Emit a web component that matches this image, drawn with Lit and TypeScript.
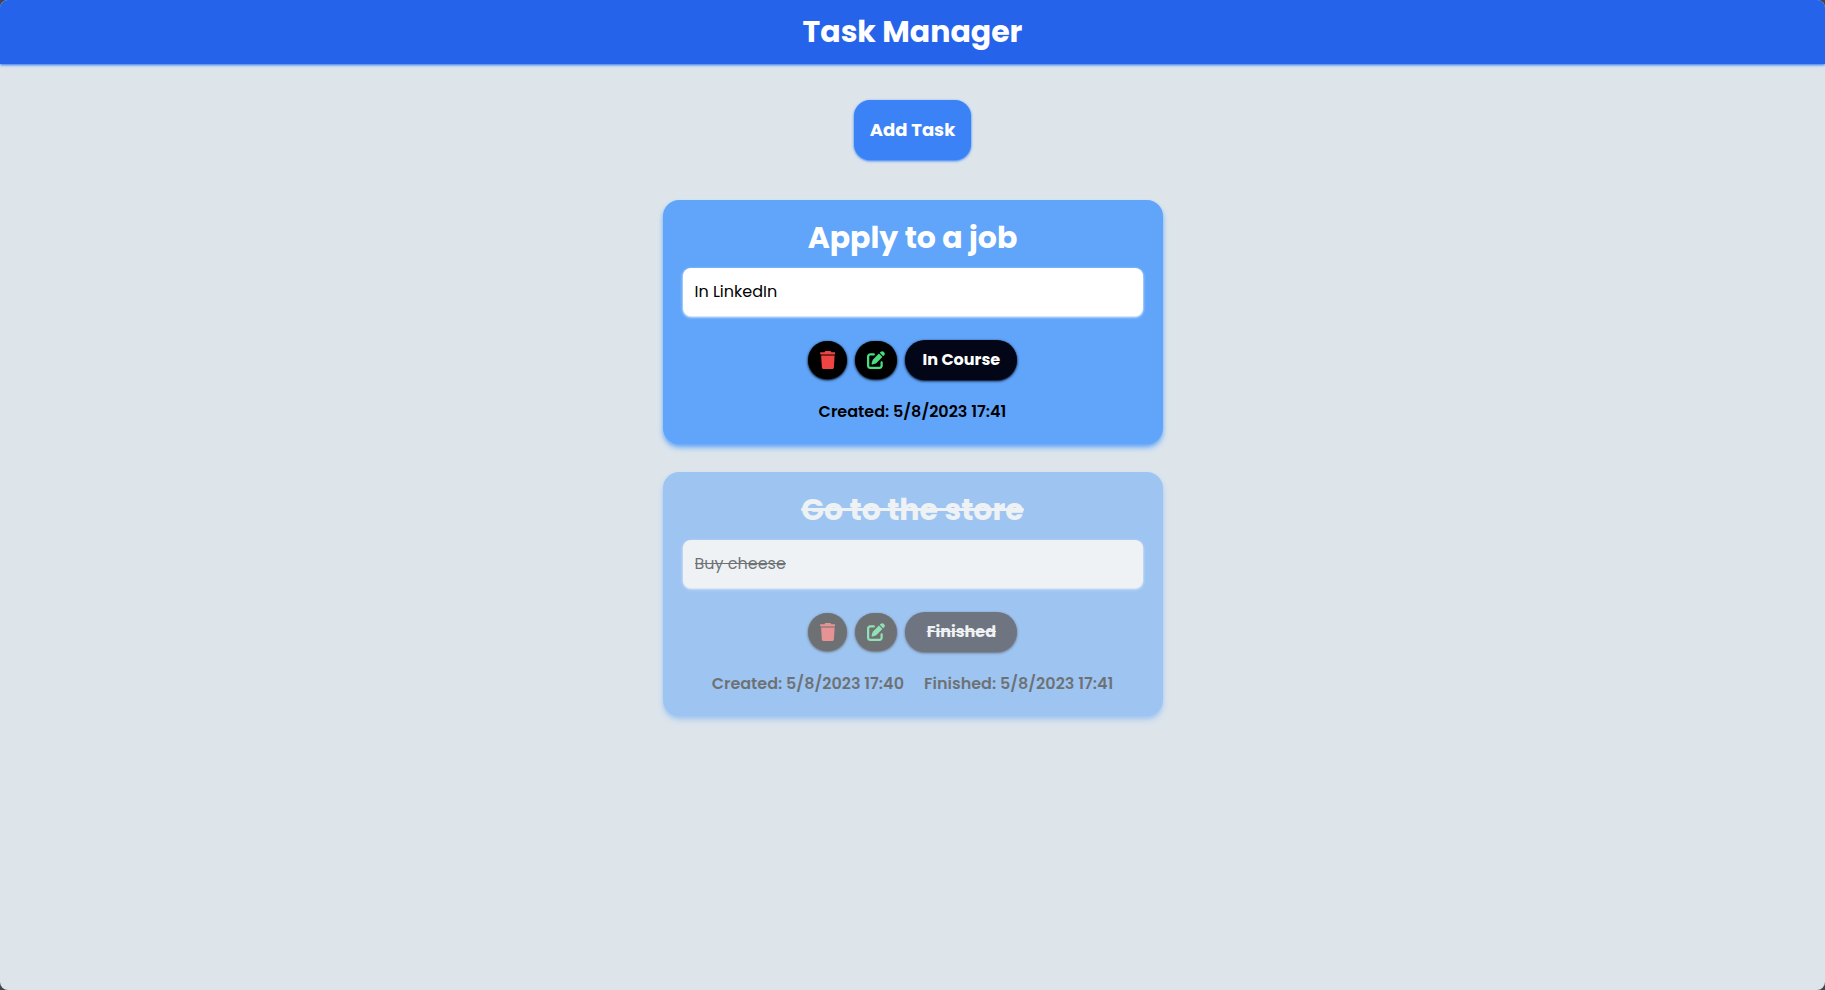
import { LitElement, html, svg, css, nothing } from "lit";
import { customElement, property } from "lit/decorators.js";
import { classMap } from "lit/directives/class-map.js";

interface Task {
  id: number;
  title: string;
  description: string;
  created: string;
  finished?: string;
}

const tasks: Task[] = [
  { id: 1, title: "Apply to a job", description: "In LinkedIn", created: "5/8/2023 17:41" },
  {
    id: 2,
    title: "Go to the store",
    description: "Buy cheese",
    created: "5/8/2023 17:40",
    finished: "5/8/2023 17:41",
  },
];

const trashPath = svg`<path d="M135.2 17.7L128 32H32C14.3 32 0 46.3 0 64S14.3 96 32 96H416c17.7 0 32-14.3 32-32s-14.3-32-32-32H320l-7.2-14.3C307.4 6.8 296.3 0 284.2 0H163.8c-12.1 0-23.2 6.8-28.6 17.7zM416 128H32L53.2 467c1.6 25.3 22.6 45 47.9 45H346.9c25.3 0 46.3-19.7 47.9-45L416 128z"/>`;
const editPath = svg`<path d="M471.6 21.7c-21.9-21.9-57.3-21.9-79.2 0L362.3 51.7l97.9 97.9 30.1-30.1c21.9-21.9 21.9-57.3 0-79.2L471.6 21.7zm-299.2 220c-6.1 6.1-10.8 13.6-13.5 21.9l-29.6 88.8c-2.9 8.6-.6 18.1 5.8 24.6s15.9 8.7 24.6 5.8l88.8-29.6c8.2-2.7 15.7-7.4 21.9-13.5L437.7 172.3 339.7 74.3 172.4 241.7zM96 64C43 64 0 107 0 160V416c0 53 43 96 96 96H352c53 0 96-43 96-96V320c0-17.7-14.3-32-32-32s-32 14.3-32 32v96c0 17.7-14.3 32-32 32H96c-17.7 0-32-14.3-32-32V160c0-17.7 14.3-32 32-32h96c17.7 0 32-14.3 32-32s-14.3-32-32-32H96z"/>`;

@customElement("task-card")
export class TaskCard extends LitElement {
  @property({ attribute: false }) task!: Task;

  static styles = css`
    :host {
      display: block;
    }
    .card {
      display: flex;
      flex-direction: column;
      align-items: center;
      box-sizing: border-box;
      padding: 16px 20px 20px;
      border-radius: 16px;
      background: #60a5fa;
      box-shadow: 0 4px 6px -1px #60a5fa, 0 2px 4px -2px #60a5fa;
    }
    .done {
      opacity: 0.5;
    }
    .done .title,
    .done .description,
    .done .status {
      text-decoration: line-through;
    }
    .title {
      margin: 0 0 8px;
      font-size: 30px;
      line-height: 44px;
      font-weight: 700;
      color: #fff;
    }
    .description {
      box-sizing: border-box;
      width: 100%;
      height: 48px;
      padding: 0 12px 2px;
      border: 0;
      border-radius: 8px;
      outline: 0;
      background: #fff;
      color: #000;
      font: inherit;
      font-size: 16px;
      box-shadow: 0 1px 3px #fff, 0 1px 2px -1px #fff;
    }
    .actions {
      display: flex;
      align-items: center;
      gap: 8px;
      margin: 24px 0 20px;
    }
    button {
      border: 0;
      font: inherit;
      cursor: pointer;
    }
    .icon {
      display: flex;
      padding: 10px 12px;
      border-radius: 20px;
      background: #000;
      box-shadow: 0 1px 3px #000, 0 1px 2px -1px #000;
    }
    .icon svg {
      display: block;
      height: 18px;
      fill: currentColor;
    }
    .delete {
      color: #ef4444;
    }
    .edit {
      color: #4ade80;
    }
    .status {
      min-width: 112px;
      height: 40px;
      padding: 0 16px 2px;
      border-radius: 24px;
      background: #020617;
      color: #fff;
      font-size: 16px;
      font-weight: 700;
      box-shadow: 0 1px 3px #020617, 0 1px 2px -1px #020617;
    }
    .dates {
      display: flex;
      gap: 20px;
      font-size: 16px;
      line-height: 24px;
      font-weight: 600;
      color: #000;
    }
  `;

  render() {
    const t = this.task;
    return html`
      <article class=${classMap({ card: true, done: !!t.finished })}>
        <h2 class="title">${t.title}</h2>
        <input class="description" aria-label="Description" readonly .value=${t.description} />
        <div class="actions">
          <button class="icon delete" aria-label="Delete task">
            <svg viewBox="0 0 448 512" aria-hidden="true">${trashPath}</svg>
          </button>
          <button class="icon edit" aria-label="Edit task">
            <svg viewBox="0 0 512 512" aria-hidden="true">${editPath}</svg>
          </button>
          <button class="status">${t.finished ? "Finished" : "In Course"}</button>
        </div>
        <div class="dates">
          <span>Created: ${t.created}</span>
          ${t.finished ? html`<span>Finished: ${t.finished}</span>` : nothing}
        </div>
      </article>
    `;
  }
}

@customElement("app-root")
export class AppRoot extends LitElement {
  static styles = css`
    :host {
      display: block;
      min-height: 100vh;
      background: #454549;
      font-family: Poppins, Inter, sans-serif;
    }
    .page {
      box-sizing: border-box;
      min-height: 100vh;
      border-radius: 8px;
      overflow: hidden;
      background: #dde5eb;
    }
    .header {
      display: flex;
      align-items: center;
      justify-content: center;
      height: 64px;
      background: #2563eb;
      box-shadow: 0 1px 3px #3b82f6, 0 1px 2px -1px #3b82f6;
    }
    .heading {
      margin: 0;
      font-size: 30px;
      line-height: 36px;
      font-weight: 700;
      color: #fff;
    }
    .content {
      display: flex;
      flex-direction: column;
      align-items: center;
      padding: 36px 16px;
    }
    .add {
      padding: 16px;
      border: 0;
      border-radius: 16px;
      background: #3b82f6;
      color: #fff;
      font: inherit;
      font-size: 18px;
      line-height: 28px;
      font-weight: 700;
      cursor: pointer;
      box-shadow: 0 1px 3px #3b82f6, 0 1px 2px -1px #3b82f6;
    }
    .list {
      display: grid;
      gap: 28px;
      width: 100%;
      max-width: 500px;
      margin: 40px 0 0;
    }
  `;

  render() {
    return html`
      <div class="page">
        <header class="header"><h1 class="heading">Task Manager</h1></header>
        <main class="content">
          <button class="add">Add Task</button>
          <section class="list" aria-label="Tasks">
            ${tasks.map((t) => html`<task-card .task=${t}></task-card>`)}
          </section>
        </main>
      </div>
    `;
  }
}
